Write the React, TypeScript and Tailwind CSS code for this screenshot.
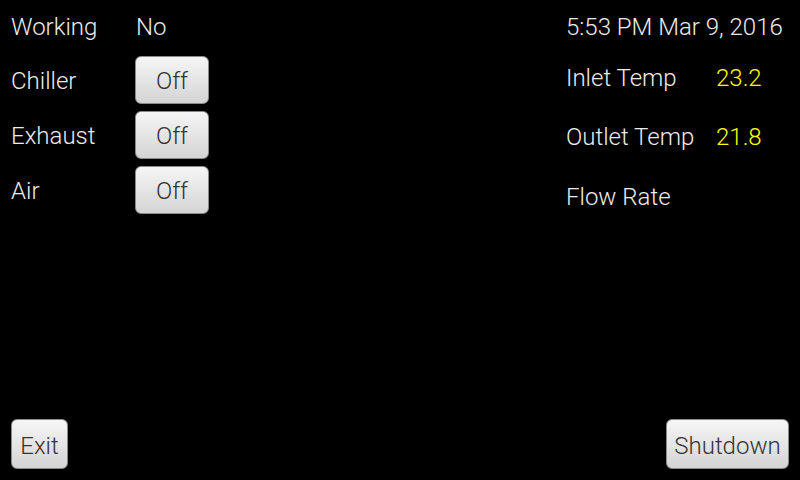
import React from "react";

const btn =
  "flex items-center justify-center rounded-[6px] border border-[#8a8a8a] bg-gradient-to-b from-[#f6f6f6] to-[#d4d4d4] text-[#333333] text-[24px] leading-[28px] font-light";

function Row({ label, children, className = "" }: { label: string; children: React.ReactNode; className?: string }) {
  return (
    <div className={"flex items-center h-[48px] " + className}>
      <div className="w-[124px] pt-[2px] text-[#ececec]">{label}</div>
      {children}
    </div>
  );
}

export default function App() {
  return (
    <div
      className="w-[800px] h-[480px] bg-black flex flex-col text-[24px] leading-[28px] font-light"
      style={{ fontFamily: "Roboto, 'Noto Sans', sans-serif" }}
    >
      <div className="flex">
        <div className="w-[566px] pl-[11px] pt-[2px] flex flex-col">
          <Row label="Working">
            <div className="text-[#ececec] pl-[1px] pt-[2px]">No</div>
          </Row>
          <Row label="Chiller" className="mt-[6px]">
            <button className={btn + " w-[74px] h-[48px] pt-[2px]"}>Off</button>
          </Row>
          <Row label="Exhaust" className="mt-[7px]">
            <button className={btn + " w-[74px] h-[48px] pt-[2px]"}>Off</button>
          </Row>
          <Row label="Air" className="mt-[7px]">
            <button className={btn + " w-[74px] h-[48px] pt-[2px]"}>Off</button>
          </Row>
        </div>
        <div className="flex-1 flex flex-col pt-[13px] text-[#ececec]">
          <div>5:53 PM Mar 9, 2016</div>
          <div className="flex mt-[23px]">
            <div className="w-[150px]">Inlet Temp</div>
            <div className="text-[#ffff00]">23.2</div>
          </div>
          <div className="flex mt-[31px]">
            <div className="w-[150px]">Outlet Temp</div>
            <div className="text-[#ffff00]">21.8</div>
          </div>
          <div className="flex mt-[32px]">
            <div className="w-[150px]">Flow Rate</div>
          </div>
        </div>
      </div>
      <div className="mt-auto flex justify-between items-end px-[11px] pb-[11px]">
        <button className={btn + " w-[57px] h-[50px] pt-[4px]"}>Exit</button>
        <button className={btn + " w-[123px] h-[50px] pt-[4px]"}>Shutdown</button>
      </div>
    </div>
  );
}
